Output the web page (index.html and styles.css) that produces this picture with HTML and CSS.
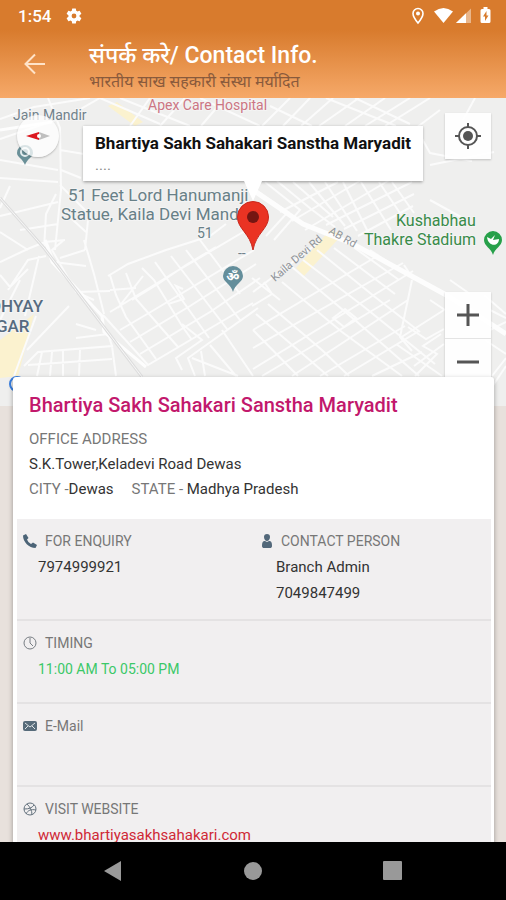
FILE: index.html
```html
<!DOCTYPE html>
<html lang="hi">
<head>
<meta charset="utf-8">
<meta name="viewport" content="width=device-width, initial-scale=1">
<title>Contact Info.</title>
<link rel="stylesheet" href="styles.css">
</head>
<body>
<div class="screen">
  <header class="top">
    <div class="status">
      <span class="clock">1:54</span>
      <svg class="gear" viewBox="0 0 24 24" width="18" height="18"><path fill="currentColor" fill-rule="evenodd" d="M19.4 13a7.500 7.500 0 0 0 0-2l2.200-1.700a.5.5 0 0 0 .1-.6l-2-3.500a.5.5 0 0 0-.6-.2l-2.500 1a7.300 7.300 0 0 0-1.700-1l-.4-2.600a.5.5 0 0 0-.5-.4h-4a.5.5 0 0 0-.5.400l-.4 2.600a7.300 7.300 0 0 0-1.700 1l-2.500-1a.5.5 0 0 0-.6.200l-2 3.500a.5.5 0 0 0 .1.600L4.600 11a7.500 7.500 0 0 0 0 2l-2.200 1.700a.5.5 0 0 0-.1.600l2 3.500c.1.200.4.300.6.200l2.500-1a7.300 7.300 0 0 0 1.700 1l.4 2.600c0 .2.200.4.500.4h4c.3 0 .5-.2.500-.4l.4-2.600a7.300 7.300 0 0 0 1.700-1l2.500 1c.2.100.5 0 .6-.2l2-3.500a.5.5 0 0 0-.1-.6zM12 15.200a3.200 3.200 0 1 1 0-6.400 3.200 3.200 0 0 1 0 6.400z"/></svg>
      <svg class="signals" viewBox="0 0 82 18" width="82" height="18" fill="currentColor">
        <path fill="none" stroke="currentColor" stroke-width="1.600" d="M8 1.500a5 5 0 0 0-5 5c0 3.500 5 9.500 5 9.500s5-6 5-9.500a5 5 0 0 0-5-5z"/><circle cx="8" cy="6.500" r="2"/>
        <path d="M24 4.500Q33.500-2.500 43 4.500L33.500 16z"/>
        <path opacity=".45" d="M61 1.500V16H46z"/><path d="M56 6.300V16H46z"/>
        <path fill-rule="evenodd" d="M73.500 0h4v2H79q1.500 0 1.500 1.500v11Q80.500 16 79 16h-7q-1.500 0-1.500-1.500v-11Q70.500 2 72 2h1.500zM76.500 4L73 9.500h2V14l3.500-5.500h-2z"/>
      </svg>
    </div>
    <div class="bar">
      <button class="back" aria-label="Back"><svg viewBox="0 0 22 22" width="22" height="22" fill="none" stroke="currentColor" stroke-width="2"><path d="M21 11H2M11 1.500L1.500 11l9.500 9.500"/></svg></button>
      <div class="titles">
        <h1>संपर्क करे/ Contact Info.</h1>
        <p>भारतीय साख सहकारी संस्था मर्यादित</p>
      </div>
    </div>
  </header>

  <main>
    <section class="map" aria-label="Map">
      <svg class="tiles" viewBox="0 98 506 308" preserveAspectRatio="xMidYMid slice">
        <rect y="98" width="506" height="308" fill="#efefee"/>
        <g fill="#fbf2cf"><path d="M108 106l9-4 26 20-8 4zM0 340l34-26-16 62-18 2zM296 268l34-38 12 5-38 41z"/></g>
        <g fill="none" stroke="#fbfbfb" stroke-width="2">
          <path d="M0 119l34-12 56-9M0 139l70-24 30-17M48 98l12 30 1 62-6 60M0 160l58 10M0 178l58 4M10 186l-10 22M0 216l58-14M20 230l38-6M0 232l28 18M60 150l24 4M61 170l20 8M60 185l26 26M62 210l24 22M44 250l2-36 10-20M85 250l4-40M100 98l60 26M120 98l70 28M150 98l-20 28M185 98l-25 28M200 98l60 28M225 98l-24 28M0 262l30-14 15-6 20-2M0 275l10 12 18-18M8 290l20-30 18-4M0 320l20-40M25 316l14-60M27 350l42-44M14 376l22-60M46 240l8 22 32 4M64 240l-12 10 24 42 18 8M60 258l25-8M84 240l10 34 10 40M76 292l34-1M96 330l-20-6M24 366l14-14 74-6-4-12-32 4M42 352l-5 24M52 352l-2 24M63 351v25M80 350l-1 26M28 365l84-6M112 346l4 30"/>
          <path d="M103 315l45 50 105-62M110 312l36-22 26-16 78-46M108 276l20-12 38-14 44-14 16-12M110 275l6 20 10 22 30 42M126 273l10 26 42 48M142 268l12 12 28 46 10 14M155 262l54 76M171 256l20 26 36 47M186 250l54 70M200 240l18 24 22 30M118 308l25-32M120 330l34-20 30-18 70-42M130 342l60-36 66-42M140 354l70-42 50-34M110 290l26-2M132 300l26-16 28-19 30-18M168 304l16-5-8-13 7 3M182 370l-6-12 26-18-20-16M195 376l-7-18 70-50M205 376l-4-25M210 345l26 31M222 330l31 46M192 358l46 18"/>
          <path d="M256 190l32 22-22 24M265 182l35 28-26 30M277 181l34 28 24 18M293 182l40 35M309 182l36 44M325 182l32 49M343 182l28 56M361 182l30 48M379 182l25 37M392 182l22 31M280 212l58-30M292 221l76-45M305 230l98-58M326 225l86-43M344 229l70-35M358 236l55-30M270 106l42 20M290 98l-28 28M310 98l-27 28M333 98l-32 28M359 98l-40 28M385 98l-40 28M410 98l-45 28M430 98l-45 28M440 110l-24 18 14 25 42 8M326 98l70 28M355 98l55 26M430 165l64-13M475 98l-12 22M430 200l40 22"/>
          <path d="M253 292l24-18 42-32M264 282l8 12-20 12M280 300l-28-22M253 330l126-75M253 348l150-85M253 369l160-98M262 376l128-76M292 376l116-76M320 376l85-50M344 376l75-45M372 376l50-24M282 282l60 50 60 44M292 267l64 54 63 55M303 260l60 46 72 58M317 250l58 47 45 35M334 248l61 46M352 246l47 34M370 250l36 24M268 304l54 46 27 26M256 314l56 48 16 14M253 330l45 46M412 280l-5 24-7 33 12 14M404 265l10 15M400 338l44-28M408 327l18 12 18-10M415 376l22-22-14-8 18-12M396 344l46 32M430 300l15 10M333 318l12-9 11 9-12 9zM414 366l30-22M485 340l21 14M492 376l14-18M490 310l16 8M450 280l20 14M484 295l22 19M490 390l16-24M490 330l16-8"/>
        </g>
        <g fill="none" stroke="#fdfdfd"><path stroke-width="5" d="M253 190l50 34 50 20 95 52 58 38"/><path stroke-width="3" d="M45 240l7 22 50 54 2 16 42 35M0 130l52-8"/></g>
        <g fill="none"><path stroke="#dedede" stroke-width="3" d="M0 198l44 50 98 129"/><path stroke="#f7f7f7" d="M0 198l44 50 98 129"/></g>
        <g class="poi">
          <text class="slate" x="13" y="120" font-size="14">Jain Mandir</text>
          <text class="rose" x="148" y="110" font-size="14">Apex Care Hospital</text>
          <text class="teal" x="68" y="201" font-size="17">51 Feet Lord Hanumanji</text>
          <text class="teal" x="61" y="220" font-size="17">Statue, Kaila Devi Mand</text>
          <text class="teal" x="197" y="238" font-size="14">51</text>
          <text class="green" x="396" y="226" font-size="16">Kushabhau</text>
          <text class="green" x="364" y="245" font-size="16">Thakre Stadium</text>
          <text class="area" x="-10" y="312" font-size="17">DHYAY</text>
          <text class="area" x="-4" y="332" font-size="17">GAR</text>
          <text class="road" font-size="11" transform="translate(328 233) rotate(30)">AB Rd</text>
          <text class="road" font-size="11" transform="translate(275 282) rotate(-41)">Kaila Devi Rd</text>
          <text class="slate" x="238" y="258" font-size="14">--</text>
        </g>
        <g><path fill="#6a9098" d="M25 145a8 8 0 0 1 8 8c0 4-6 6-8 12-2-6-8-8-8-12a8 8 0 0 1 8-8z"/><circle cx="25" cy="152" r="4" fill="none" stroke="#e5eef0" stroke-width="2"/></g>
        <g><path fill="#648e9b" d="M233 266a10 10 0 0 1 10 10c0 6-8 8-10 16-2-8-10-10-10-16a10 10 0 0 1 10-10z"/><text class="om" x="233" y="281" font-size="13" text-anchor="middle">ॐ</text></g>
        <g><path fill="#27a04a" d="M493 231a9 9 0 0 1 9 9c0 6-7 8-9 15-2-7-9-9-9-15a9 9 0 0 1 9-9z"/><path fill="#fff" d="M487 237l4 2 4-4-2 5 6-1c0 8-11 8-12-2z"/></g>
        <circle cx="17" cy="384" r="7" fill="none" stroke="#397fe0" stroke-width="2"/>
      </svg>
      <div class="compass"><svg viewBox="0 0 42 42" width="42" height="42"><path fill="#dc1820" d="M9 21l13-4v8z"/><path fill="#bfbfbf" d="M33 21l-11-4v8z"/><circle cx="22" cy="21" r="2" fill="#fff"/></svg></div>
      <div class="callout"><strong>Bhartiya Sakh Sahakari Sanstha Maryadit</strong><span>....</span></div>
      <svg class="pin" viewBox="0 0 32 50" width="32" height="50"><path fill="#ea3323" stroke="#c9281d" d="M16 .5A15.500 15.500 0 0 1 31.500 16C31.500 28 19 32 16 49 13 32 .5 28 .5 16A15.500 15.500 0 0 1 16 .5z"/><circle cx="16" cy="16" r="6" fill="#751612"/></svg>
      <button class="locate" aria-label="My location"><svg viewBox="0 0 26 26" width="26" height="26" fill="none" stroke="#555" stroke-width="2"><circle cx="13" cy="13" r="9"/><circle cx="13" cy="13" r="5" fill="#555" stroke="none"/><path d="M13 0v5M13 21v5M0 13h5M21 13h5"/></svg></button>
      <div class="zoom">
        <button aria-label="Zoom in"><svg viewBox="0 0 22 22" width="22" height="22" stroke="#555" stroke-width="3"><path d="M11 0v22M0 11h22"/></svg></button>
        <button aria-label="Zoom out"><svg viewBox="0 0 22 22" width="22" height="22" stroke="#555" stroke-width="3"><path d="M0 11h22"/></svg></button>
      </div>
    </section>

    <article class="card">
      <section class="address">
        <h2>Bhartiya Sakh Sahakari Sanstha Maryadit</h2>
        <p class="label">OFFICE ADDRESS</p>
        <p>S.K.Tower,Keladevi Road Dewas</p>
        <p class="city"><span><span class="label">CITY -</span>Dewas</span><span><span class="label">STATE -</span> Madhya Pradesh</span></p>
      </section>
      <section class="row contacts">
        <div>
          <h3><svg viewBox="0 0 14 14" width="14" height="14"><path fill="#4c6477" d="M3 0L0 1.500C0 8 6 14 12.500 14L14 11l-4-2.500L8 10Q5 8.500 4 5.500L5.500 4z"/></svg>FOR ENQUIRY</h3>
          <p>7974999921</p>
        </div>
        <div>
          <h3><svg viewBox="0 0 12 14" width="12" height="14"><path fill="#53687a" d="M6 0a3 3 0 0 1 3 3c0 2-1.300 4-3 4S3 5 3 3a3 3 0 0 1 3-3zM1 12c0-4 1-5 3-5l2 1 2-1c2 0 3 1 3 5 0 1.500-1 2-2 2H3c-1 0-2-.5-2-2z"/></svg>CONTACT PERSON</h3>
          <p>Branch Admin</p>
          <p>7049847499</p>
        </div>
      </section>
      <section class="row">
        <h3><svg viewBox="0 0 14 14" width="14" height="14" fill="none" stroke="#777d83"><circle cx="7" cy="7" r="6"/><path d="M7 2v5l3 3"/></svg>TIMING</h3>
        <p class="hours">11:00 AM To 05:00 PM</p>
      </section>
      <section class="row">
        <h3><svg viewBox="0 0 14 14" width="14" height="14"><rect y="2" width="14" height="10" rx="2" fill="#576b7a"/><path d="M2 4l5 4 5-4M2 10l3-3M12 10L9 7" fill="none" stroke="#dfe4e7"/></svg>E-Mail</h3>
      </section>
      <section class="row">
        <h3><svg viewBox="0 0 14 14" width="14" height="14" fill="none" stroke="#63717d"><circle cx="7" cy="7" r="6"/><path d="M4 2c3 3 5 6 5 11M1 7c5 0 8-1 10-4M3 12c2-4 5-5 10-4"/></svg>VISIT WEBSITE</h3>
        <p><a href="#">www.bhartiyasakhsahakari.com</a></p>
      </section>
    </article>
  </main>

  <nav class="nav">
    <button aria-label="Back"><svg viewBox="0 0 20 22" width="20" height="22"><path fill="#999" d="M18 1v20L1 11z"/></svg></button>
    <button aria-label="Home"><svg viewBox="0 0 20 20" width="20" height="20"><circle cx="10" cy="10" r="9" fill="#999"/></svg></button>
    <button aria-label="Recents"><svg viewBox="0 0 20 20" width="20" height="20"><rect width="19" height="19" rx="1" fill="#999"/></svg></button>
  </nav>
</div>
</body>
</html>
```
FILE: styles.css
```css
* { box-sizing: border-box; }
body, h1, h2, h3, p { margin: 0; }
body { font-family: Roboto, "Noto Sans", sans-serif; color: #333; background: #e8e1dc; }
button { border: 0; padding: 0; background: none; color: inherit; display: flex; align-items: center; justify-content: center; cursor: pointer; }
svg { display: block; }

.screen { height: 100vh; display: flex; flex-direction: column; }

.top { height: 98px; flex: none; color: #fff; background: linear-gradient(#d87b2d 30px, #f6a969); }
.status { height: 32px; display: flex; align-items: center; padding: 0 14px 0 18px; }
.clock { font-size: 17px; font-weight: 500; }
.gear { margin-left: 14px; }
.signals { margin-left: auto; }
.bar { display: flex; align-items: center; padding-left: 24px; }
.back { width: 22px; height: 64px; color: #ffe3c8; }
.titles { margin-left: 43px; padding-top: 4px; }
h1 { font-size: 23px; line-height: 32px; font-weight: 500; white-space: nowrap; }
.titles p { font-size: 16px; line-height: 20px; color: #895a3c; white-space: nowrap; }

main { flex: 1; min-height: 0; overflow: hidden; }
.map { position: relative; height: 308px; overflow: hidden; }
.tiles { width: 100%; height: 100%; }
.poi text { paint-order: stroke; stroke: #f4f4f4; stroke-width: 2px; }
.slate { fill: #71828c; }
.rose { fill: #cc7683; }
.teal { fill: #688087; }
.green { fill: #398b49; }
.area { fill: #566b80; font-weight: 500; }
.poi .road { fill: #90959a; stroke: none; }
.om { fill: #fff; font-weight: 700; }
.compass { position: absolute; left: 17px; top: 17px; border-radius: 50%; background: rgba(255, 255, 255, .75); box-shadow: 0 1px 2px rgba(0, 0, 0, .25); }
.callout { position: absolute; left: 50%; top: 28px; transform: translateX(-50%); height: 55px; padding: 6px 12px; background: #fff; box-shadow: 0 1px 3px rgba(0, 0, 0, .4); white-space: nowrap; }
.callout::after { content: ""; position: absolute; left: 50%; top: 100%; margin-left: -9px; border: 9px solid transparent; border-top: 20px solid #fff; border-bottom: 0; }
.callout strong, .callout span { display: block; line-height: 22px; }
.callout strong { font-size: 17px; font-weight: 700; color: #111; }
.callout span { font-size: 15px; color: #888; }
.pin { position: absolute; left: 50%; top: 103px; margin-left: -16px; }
.locate, .zoom { position: absolute; right: 15px; width: 46px; background: rgba(255, 255, 255, .9); box-shadow: 0 1px 2px rgba(0, 0, 0, .2); }
.locate { top: 15px; height: 46px; }
.zoom { top: 194px; }
.zoom button { width: 46px; height: 46px; }
.zoom button + button { border-top: 1px solid #e4e4e4; }

.card { position: relative; margin: -29px 12px 0 13px; padding: 0 3px 0 4px; background: #fff; border-radius: 3px; box-shadow: 0 2px 5px rgba(0, 0, 0, .35); }
.address { height: 142px; padding: 12px 12px 0; font-size: 15px; line-height: 25px; }
h2 { font-size: 20px; line-height: 32px; margin-bottom: 6px; font-weight: 500; color: #c2186c; }
.label, h3 { color: #777; }
.city { display: flex; gap: 18px; }
.row { height: 83px; padding: 9px 6px 0; background: #f1eff0; border-bottom: 2px solid #e4e2e3; font-size: 15px; line-height: 26px; }
.row h3 { display: flex; align-items: center; gap: 8px; font-size: 14px; font-weight: 400; }
.row p { padding-left: 15px; }
.contacts { height: 102px; display: grid; grid-template-columns: 17fr 16fr; }
.row .hours { font-size: 14px; color: #3bc868; }
a { color: #cf2836; text-decoration: none; }

.nav { position: relative; height: 58px; flex: none; display: flex; justify-content: center; gap: 120px; background: #000; }
.nav button { width: 20px; }
```
